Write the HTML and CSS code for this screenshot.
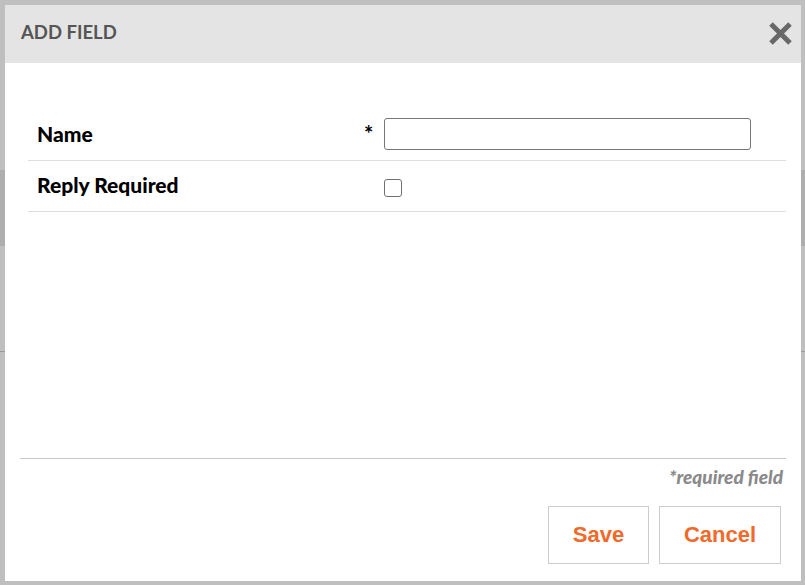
FILE: index.html
```html
<!DOCTYPE html>
<html>
<head>
<meta charset="utf-8">
<link rel="stylesheet" href="styles.css">
</head>
<body>
<div class="modal">
  <div class="modal-header">
    <h1 class="title">ADD FIELD</h1>
    <button class="close" aria-label="Close">
      <svg width="25" height="25" viewBox="0 0 25 25"><path d="M3 3 L22 22 M22 3 L3 22" stroke="#686868" stroke-width="5" stroke-linecap="butt"/></svg>
    </button>
  </div>
  <div class="modal-body">
    <div class="rows">
      <div class="row">
        <div class="label">Name</div>
        <div class="req">*</div>
        <div class="control"><input class="text-input" type="text"></div>
      </div>
      <div class="row">
        <div class="label">Reply Required</div>
        <div class="req"></div>
        <div class="control"><input class="check" type="checkbox"></div>
      </div>
    </div>
  </div>
  <div class="modal-footer">
    <div class="note">*required field</div>
    <div class="buttons">
      <button class="btn btn-save">Save</button>
      <button class="btn btn-cancel">Cancel</button>
    </div>
  </div>
</div>
</body>
</html>
```
FILE: styles.css
```css
html, body {
  margin: 0;
  padding: 0;
  height: 100%;
}
body {
  background:
    linear-gradient(to bottom,
      #bfbfbf 0, #bfbfbf 170px,
      #aeaeae 170px, #aeaeae 246px,
      #bfbfbf 246px, #bfbfbf 351px,
      #9a9a9a 351px, #9a9a9a 352px,
      #bfbfbf 352px);
  font-family: "Lato", "Liberation Sans", sans-serif;
  padding: 5px 4px 4px 5px;
  box-sizing: border-box;
}
.modal {
  background: #fff;
  height: 576px;
  display: flex;
  flex-direction: column;
}
.modal-header {
  background: #e4e4e4;
  height: 58px;
  display: flex;
  align-items: center;
  justify-content: space-between;
  padding: 0 8px 0 16px;
}
.title {
  margin: 0;
  font-size: 18.5px;
  font-weight: 700;
  color: #555;
  letter-spacing: 0;
  margin-top: -5px;
}
.close {
  border: 0;
  background: none;
  padding: 0;
  width: 25px;
  height: 25px;
  cursor: pointer;
  margin-top: -1px;
}
.close svg { display: block; }
.modal-body {
  flex: 1;
  padding: 47px 15px 0 23px;
}
.row {
  display: flex;
  align-items: center;
  height: 50px;
  border-bottom: 1px solid #dedede;
}
.label {
  width: 328px;
  padding-left: 9px;
  box-sizing: border-box;
  font-size: 21px;
  font-weight: 900;
  color: #000;
  margin-top: -4px;
}
.req {
  width: 28px;
  font-size: 22px;
  font-weight: 700;
  color: #000;
  padding-left: 8px;
  box-sizing: border-box;
  margin-top: -4px;
}
.control {
  display: flex;
  align-items: center;
}
.text-input {
  width: 367px;
  height: 32px;
  box-sizing: border-box;
  border: 1px solid #767676;
  border-radius: 3px;
  margin: -3px 0 0 0;
  padding: 0 6px;
  font-family: inherit;
  font-size: 16px;
}
.check {
  -webkit-appearance: none;
  appearance: none;
  width: 18px;
  height: 18px;
  margin: 3px 0 0 0;
  border: 1.5px solid #707070;
  border-radius: 3px;
  background: #fff;
  box-sizing: border-box;
}
.modal-footer {
  margin: 0 15px;
  border-top: 1px solid #c8c8c8;
  padding: 8px 0 17px;
  display: flex;
  flex-direction: column;
  align-items: flex-end;
}
.note {
  font-size: 19px;
  font-style: italic;
  font-weight: 900;
  color: #8a8a8a;
  letter-spacing: 0;
  padding-right: 3px;
  line-height: 20px;
}
.buttons {
  display: flex;
  gap: 10px;
  margin-top: 19px;
  padding-right: 5px;
}
.btn {
  height: 58px;
  background: #fff;
  border: 1px solid #cccccc;
  font-family: "Liberation Sans", Arial, sans-serif;
  font-weight: 700;
  font-size: 22px;
  color: #f26a2b;
  padding: 0;
  cursor: pointer;
}
.btn-save { width: 101px; }
.btn-cancel { width: 122px; }
```
